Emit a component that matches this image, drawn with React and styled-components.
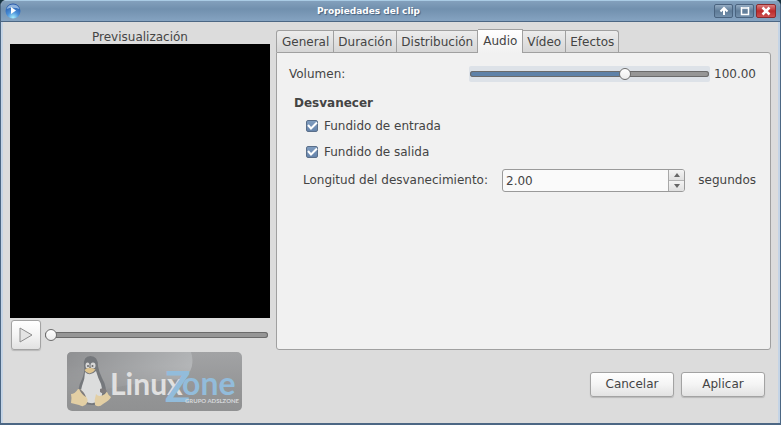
import React, { useState } from 'react'
import styled, { createGlobalStyle, css } from 'styled-components'

const GlobalStyle = createGlobalStyle`
  * {
    box-sizing: border-box;
  }
  body {
    margin: 0;
    background: #16323f;
  }
  body, button, input {
    font-family: "DejaVu Sans", "Liberation Sans", sans-serif;
    font-size: 12px;
    line-height: 15px;
    color: #444;
  }
`

const Window = styled.div`
  display: flex;
  flex-direction: column;
  min-height: 100vh;
  background: #dcdcdc;
  border: 1px solid #4c6784;
  border-top: none;
  border-bottom-width: 2px;
  border-radius: 6px 6px 0 0;
  overflow: hidden;
`

const TitleBar = styled.header`
  display: flex;
  align-items: center;
  height: 22px;
  padding: 0 4px;
  border-top: 1px solid #a9cbe4;
  border-bottom: 1px solid #4c6784;
  background: linear-gradient(#83a0bc, #7190ae 40%, #85a3c1);
`

const Title = styled.h1`
  flex: 1;
  margin: 0;
  padding-left: 2px;
  font-size: 9px;
  line-height: 12px;
  font-weight: bold;
  text-align: center;
  color: #fff;
  text-shadow: 1px 1px 1px #46607c;
`

const WindowButtons = styled.div`
  display: flex;
  gap: 2px;
`

const WindowButton = styled.button`
  display: flex;
  align-items: center;
  justify-content: center;
  width: 19px;
  height: 14px;
  padding: 0;
  border: 1px solid #4a6480;
  border-radius: 2px;
  background: linear-gradient(#94acc3, #5f7c98 50%, #7390ac);
  ${props => props.$close && css`
    width: 20px;
    border-color: #8c2a2d;
    background: linear-gradient(#d98080, #bd2b2c 50%, #cd5050);
  `}
`

const Content = styled.main`
  flex: 1;
  display: flex;
  gap: 6px;
  padding: 7px 7px 12px 7px;
  border: solid #c4d4e6;
  border-width: 0 2px;
`

const PreviewColumn = styled.section`
  display: flex;
  flex-direction: column;
  flex: 0 0 260px;
`

const PreviewTitle = styled.h2`
  margin: 0;
  padding-top: 2px;
  font-size: 12px;
  line-height: 13px;
  font-weight: normal;
  text-align: center;
`

const Screen = styled.div`
  flex: 1;
  min-height: 160px;
  background: #000;
`

const Transport = styled.div`
  display: flex;
  align-items: center;
  gap: 3px;
  padding: 2px 1px 2px 1px;
`

const raised = css`
  border: 1px solid #a3a3a3;
  border-radius: 3px;
  background: linear-gradient(#fff, #f4f4f4 50%, #e2e2e2);
  box-shadow: 0 1px 1px #b8b8b8;
`

const PlayButton = styled.button`
  ${raised}
  display: flex;
  align-items: center;
  justify-content: center;
  width: 30px;
  height: 30px;
  padding: 0;
`

const Range = styled.input`
  appearance: none;
  flex: 1;
  min-width: 0;
  height: 16px;
  margin: 0;
  background: ${props => (props.$focused ? '#dde2e8' : 'transparent')};
  border-radius: 2px;
  outline: none;
  &::-webkit-slider-runnable-track {
    height: 6px;
    margin: 0 1px;
    border-radius: 3px;
    background: linear-gradient(90deg, #5f82a8 var(--fill), #969696 var(--fill));
    box-shadow: inset 0 0 0 1px #6b6b6b;
  }
  &::-webkit-slider-thumb {
    appearance: none;
    width: 12px;
    height: 12px;
    margin-top: -3px;
    border: 1px solid #6e6e6e;
    border-radius: 50%;
    background: linear-gradient(#fff, #ececec);
  }
`

const Logo = styled.svg`
  display: block;
  align-self: center;
  width: 175px;
  height: 59px;
  margin-left: 29px;
`

const SettingsColumn = styled.section`
  display: flex;
  flex-direction: column;
  flex: 1;
  min-width: 0;
`

const TabList = styled.div`
  display: flex;
  align-items: flex-end;
  height: 24px;
  margin-bottom: -1px;
  z-index: 1;
`

const Tab = styled.button`
  height: 22px;
  margin: 0 0 1px;
  padding: 1px 4px 0;
  border: 1px solid #a0a0a0;
  border-left-width: ${props => (props.$first ? '1px' : 0)};
  border-bottom: none;
  background: linear-gradient(#ececec, #d6d6d6);
  &:first-child {
    padding-left: 5px;
    border-top-left-radius: 3px;
  }
  &:last-child {
    border-top-right-radius: 3px;
  }
  ${props => props.$active && css`
    height: 24px;
    margin-bottom: 0;
    padding: 0 5px 1px;
    background: linear-gradient(#fff, #f1f1f1);
  `}
`

const Panel = styled.div`
  flex: 1;
  padding: 13px 14px 13px 12px;
  border: 1px solid #a0a0a0;
  border-radius: 0 3px 3px 3px;
  background: #f1f1f1;
`

const VolumeRow = styled.div`
  display: flex;
  align-items: center;
  height: 16px;
  > label {
    flex: 0 0 180px;
  }
  > output {
    width: 42px;
    margin-left: 4px;
  }
`

const FadeGroup = styled.fieldset`
  margin: 14px 0 0;
  padding: 0 0 0 5px;
  border: none;
`

const Legend = styled.legend`
  padding: 0 0 2px;
  font-weight: bold;
`

const CheckLabel = styled.label`
  display: flex;
  align-items: center;
  gap: 6px;
  height: 26px;
  padding-left: 12px;
`

const CheckBox = styled.span`
  display: grid;
  width: 12px;
  height: 12px;
  > * {
    grid-area: 1 / 1;
  }
  > input {
    appearance: none;
    width: 12px;
    height: 12px;
    margin: 0;
    border: 1px solid #5a6f8a;
    border-radius: 2px;
    background: #fff;
  }
  > input:checked {
    background: linear-gradient(#7f9cbf, #6684ab);
  }
  > svg {
    pointer-events: none;
    visibility: hidden;
  }
  > input:checked + svg {
    visibility: visible;
  }
`

const LengthRow = styled.div`
  display: flex;
  align-items: center;
  margin-top: 4px;
  padding-left: 9px;
  > label {
    width: 199px;
  }
`

const SpinBox = styled.div`
  display: flex;
  flex: 1;
  height: 23px;
  margin-right: 13px;
  border: 1px solid #9a9a9a;
  border-radius: 3px;
  background: #fafafa;
  overflow: hidden;
  > input {
    flex: 1;
    min-width: 0;
    padding: 1px 3px 0;
    border: none;
    outline: none;
    background: transparent;
  }
`

const SpinButtons = styled.div`
  display: flex;
  flex-direction: column;
  width: 16px;
  border-left: 1px solid #a8a8a8;
  > button {
    flex: 1;
    display: flex;
    align-items: center;
    justify-content: center;
    padding: 0;
    border: none;
    background: linear-gradient(#f4f4f4, #e0e0e0);
  }
  > button + button {
    border-top: 1px solid #b4b4b4;
  }
`

const Actions = styled.footer`
  display: flex;
  justify-content: flex-end;
  gap: 7px;
  padding: 22px 6px 14px 0;
`

const ActionButton = styled.button`
  ${raised}
  width: 84px;
  height: 25px;
  padding: 0;
`

const tabs = ['General', 'Duración', 'Distribución', 'Audio', 'Vídeo', 'Efectos']

const AppIcon = () => (
  <svg width='16' height='16' viewBox='0 0 16 16' aria-hidden='true'>
    <defs>
      <radialGradient id='globe' cx='0.5' cy='0.95' r='0.9'>
        <stop offset='0' stopColor='#a8f0ff' />
        <stop offset='0.45' stopColor='#4a8fd8' />
        <stop offset='1' stopColor='#2456a8' />
      </radialGradient>
    </defs>
    <circle cx='8' cy='8' r='7.500' fill='url(#globe)' />
    <path d='M1.500 6 A7 7 0 0 1 14.500 6 Q8 3.500 1.500 6Z' fill='#b9d5f0' opacity='0.7' />
    <path d='M6 4 L11 7.500 L6 11Z' fill='#fff' />
  </svg>
)

const LinuxZoneLogo = () => (
  <Logo viewBox='0 0 175 59' role='img' aria-label='LinuxZone'>
    <defs>
      <linearGradient id='plate' x1='0' y1='0' x2='0' y2='1'>
        <stop offset='0' stopColor='#a2a3a5' />
        <stop offset='0.6' stopColor='#959697' />
        <stop offset='1' stopColor='#909192' />
      </linearGradient>
      <linearGradient id='shine' x1='0' y1='0' x2='1' y2='0.3'>
        <stop offset='0' stopColor='#8f9092' />
        <stop offset='1' stopColor='#b4b6b8' />
      </linearGradient>
      <linearGradient id='fade' x1='0' y1='0' x2='0' y2='1'>
        <stop offset='0.3' stopColor='#fff' />
        <stop offset='1' stopColor='#000' />
      </linearGradient>
      <mask id='shineMask'>
        <rect width='175' height='46' fill='url(#fade)' />
      </mask>
    </defs>
    <rect width='175' height='59' rx='5' fill='url(#plate)' />
    <path d='M5 0 H124 Q129 16 117 27 Q60 30 0 46 V5 Q0 0 5 0Z' fill='url(#shine)' mask='url(#shineMask)' />
    {/* penguin */}
    <path d='M17 14 Q16 4 23.500 4 Q31 4 31 14 Q32 20 35 26 Q41 36 38 46 Q32 54 25 53 Q15 53 12 46 Q10 36 15 27 Q18 20 17 14Z' fill='#75787c' />
    <path d='M18 20 Q23 25 29 19 Q31 26 34 32 Q37 42 33 48 Q26 54 18 49 Q12 42 15 34 Q18 27 18 20Z' fill='#dcdddd' />
    <ellipse cx='20.500' cy='13.500' rx='2' ry='3' fill='#d8d8d8' />
    <ellipse cx='26' cy='13.500' rx='2.500' ry='3' fill='#d8d8d8' />
    <circle cx='21' cy='14' r='1' fill='#6a6a6a' />
    <circle cx='25.500' cy='14' r='1' fill='#6a6a6a' />
    <path d='M17.500 18 Q22 14 28.500 17.500 Q26 21 22.500 21.500 Q19 21 17.500 18Z' fill='#dfc48e' />
    <path d='M4 42 Q8 42 11 37 Q15 37 17 42 Q22 47 20 51 Q17 56 12 53 L4 51 Q5 46 4 42Z' fill='#e3cfa4' />
    <path d='M29 42 Q32 46 38 42 Q39 40 40 40 Q41 43 44 45 Q43 48 36 52 Q32 56 28 53 Q27 48 29 42Z' fill='#e3cfa4' />
    <path d='M12 37 Q17 39 19 45 Q15 43 12 37Z M33 37 Q37 35 40 39 Q37 43 33 40Z' fill='#7f7c7d' />
    <g fontFamily='Lato, "Open Sans", sans-serif' fontWeight='bold'>
      <text x='43' y='43' fontSize='30' fill='#e0e0e0'>Linu</text>
      <text x='100' y='43' fontSize='30' fill='#e0e0e0'>x</text>
      <text x='98' y='50' fontSize='42' fontFamily='"Liberation Sans Narrow", Lato, sans-serif' fill='#92bcdb'>Z</text>
      <text x='115' y='43' fontSize='32' fill='#92bcdb'>one</text>
      <text x='118' y='51' fontSize='6' fill='#d5d8da'>GRUPO ADSLZONE</text>
    </g>
  </Logo>
)

const Check = ({ label, defaultChecked }) => (
  <CheckLabel>
    <CheckBox>
      <input type='checkbox' defaultChecked={defaultChecked} />
      <svg width='12' height='12' viewBox='0 0 12 12' aria-hidden='true'>
        <path d='M2 5 L5 8.500 L11 2.500' fill='none' stroke='#fff' strokeWidth='2' />
      </svg>
    </CheckBox>
    {label}
  </CheckLabel>
)

export default function App () {
  const [tab, setTab] = useState('Audio')
  const [volume, setVolume] = useState(100)
  const [length, setLength] = useState('2.00')

  const step = amount => setLength(Math.max(0, Number(length) + amount).toFixed(2))

  return (
    <Window>
      <GlobalStyle />
      <TitleBar>
        <AppIcon />
        <Title>Propiedades del clip</Title>
        <WindowButtons>
          <WindowButton aria-label='Enrollar'>
            <svg width='10' height='10' viewBox='0 0 10 10'>
              <path d='M5 9 V2 M1.500 5.500 L5 2 L8.500 5.500' fill='none' stroke='#fff' strokeWidth='2' />
            </svg>
          </WindowButton>
          <WindowButton aria-label='Maximizar'>
            <svg width='10' height='10' viewBox='0 0 10 10'>
              <path d='M1 2 H9 M1.500 1 V8.500 H8.500 V1' fill='none' stroke='#fff' strokeWidth='1.500' />
            </svg>
          </WindowButton>
          <WindowButton $close aria-label='Cerrar'>
            <svg width='10' height='10' viewBox='0 0 10 10'>
              <path d='M1.500 1.500 L8.500 8.500 M8.500 1.500 L1.500 8.500' stroke='#fff' strokeWidth='2.500' />
            </svg>
          </WindowButton>
        </WindowButtons>
      </TitleBar>

      <Content>
        <PreviewColumn>
          <PreviewTitle>Previsualización</PreviewTitle>
          <Screen />
          <Transport>
            <PlayButton aria-label='Reproducir'>
              <svg width='16' height='18' viewBox='0 0 16 18'>
                <path d='M2 2 L14 9 L2 16Z' fill='#e4e4e4' stroke='#8c8c8c' />
              </svg>
            </PlayButton>
            <Range type='range' aria-label='Posición' min='0' max='100' defaultValue='0' style={{ '--fill': '0%' }} />
          </Transport>
          <LinuxZoneLogo />
        </PreviewColumn>

        <SettingsColumn>
          <TabList role='tablist'>
            {tabs.map((name, i) => (
              <Tab
                key={name}
                role='tab'
                aria-selected={name === tab}
                $active={name === tab}
                $first={i === 0}
                onClick={() => setTab(name)}
              >
                {name}
              </Tab>
            ))}
          </TabList>
          <Panel role='tabpanel'>
            {tab === 'Audio' && (
              <>
                <VolumeRow>
                  <label htmlFor='volume'>Volumen:</label>
                  <Range
                    id='volume'
                    type='range'
                    min='0'
                    max='152'
                    value={volume}
                    $focused
                    style={{ '--fill': `${volume / 1.52}%` }}
                    onChange={e => setVolume(Number(e.target.value))}
                  />
                  <output htmlFor='volume'>{volume.toFixed(2)}</output>
                </VolumeRow>
                <FadeGroup>
                  <Legend>Desvanecer</Legend>
                  <Check label='Fundido de entrada' defaultChecked />
                  <Check label='Fundido de salida' defaultChecked />
                  <LengthRow>
                    <label htmlFor='length'>Longitud del desvanecimiento:</label>
                    <SpinBox>
                      <input id='length' value={length} onChange={e => setLength(e.target.value)} />
                      <SpinButtons>
                        <button aria-label='Aumentar' onClick={() => step(1)}>
                          <svg width='6' height='4' viewBox='0 0 6 4'><path d='M0 4 L3 0 L6 4Z' fill='#666' /></svg>
                        </button>
                        <button aria-label='Reducir' onClick={() => step(-1)}>
                          <svg width='6' height='4' viewBox='0 0 6 4'><path d='M0 0 L3 4 L6 0Z' fill='#666' /></svg>
                        </button>
                      </SpinButtons>
                    </SpinBox>
                    <span>segundos</span>
                  </LengthRow>
                </FadeGroup>
              </>
            )}
          </Panel>
          <Actions>
            <ActionButton>Cancelar</ActionButton>
            <ActionButton>Aplicar</ActionButton>
          </Actions>
        </SettingsColumn>
      </Content>
    </Window>
  )
}
